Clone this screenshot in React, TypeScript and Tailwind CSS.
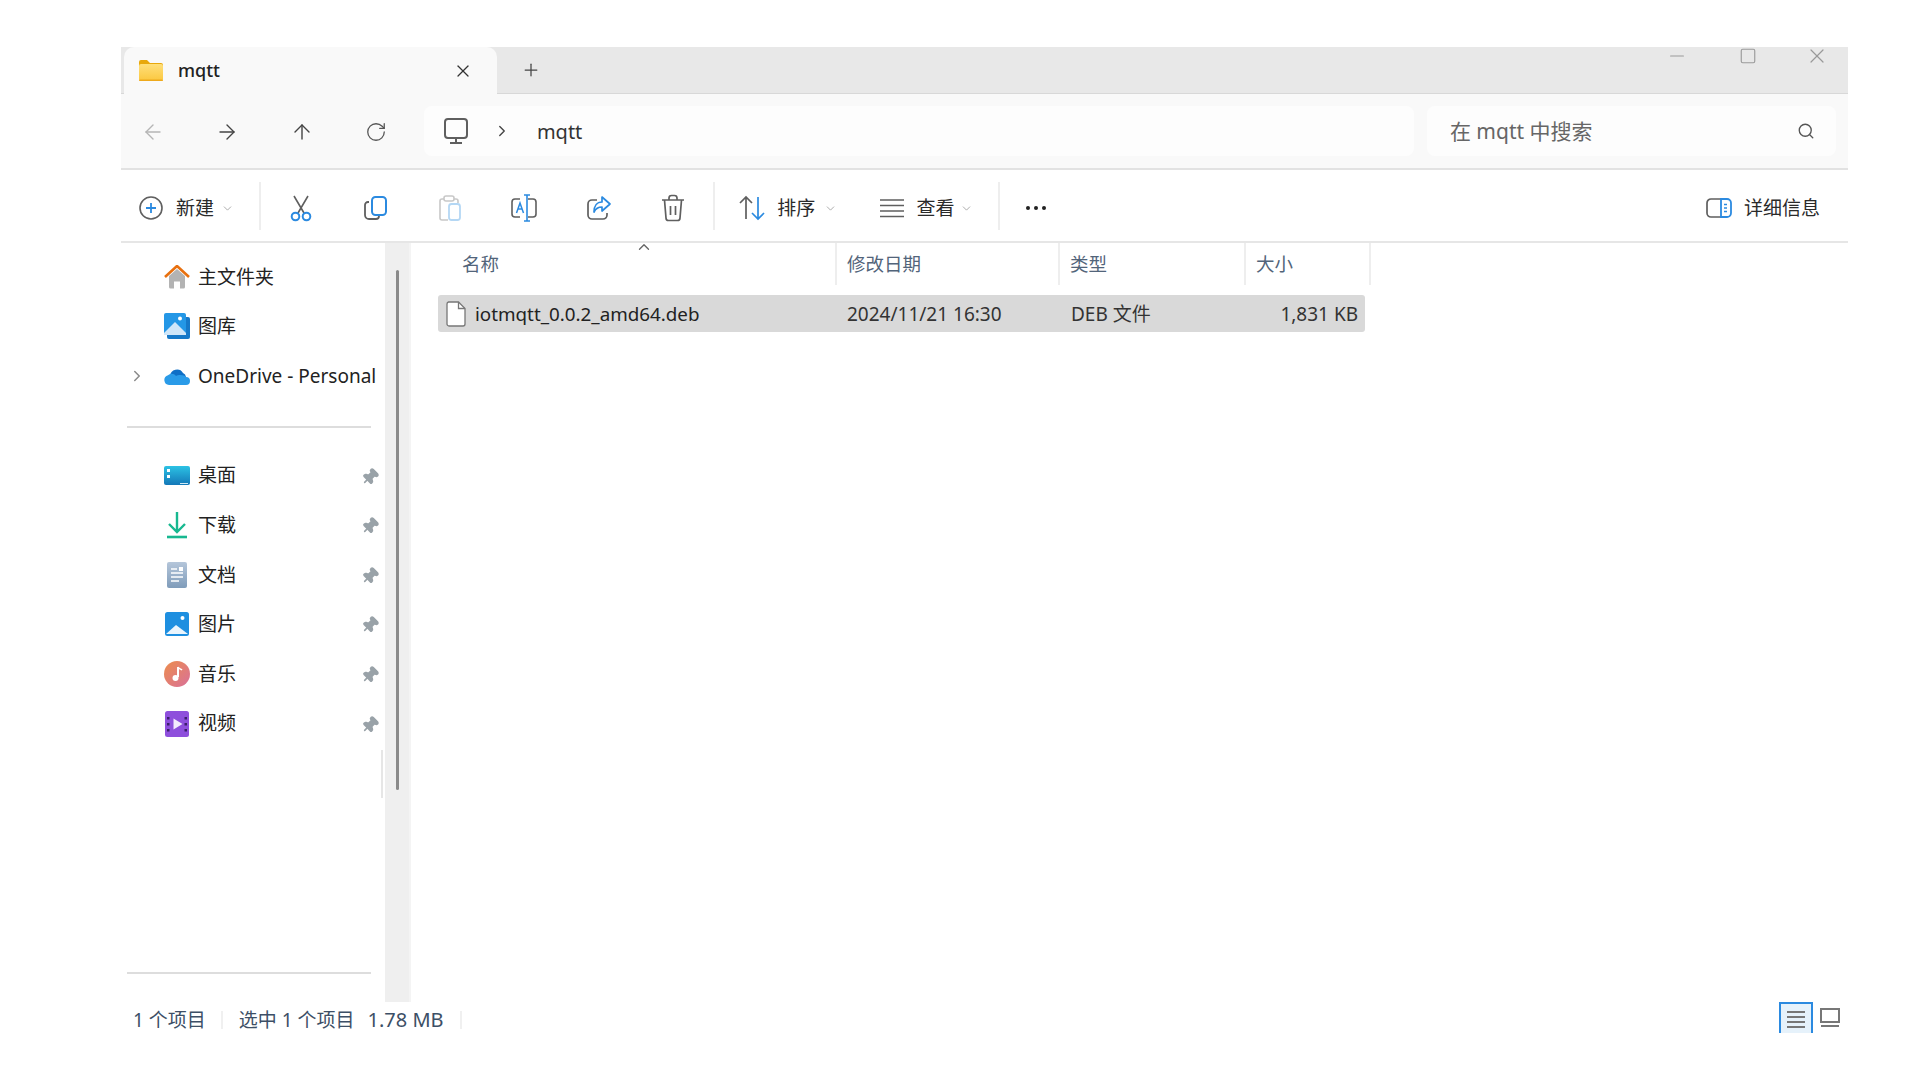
import React from 'react';
import {
  ArrowLeft,
  ArrowRight,
  ArrowUp,
  ChevronDown,
  ChevronRight,
  ChevronUp,
  Minus,
  Pin,
  Plus,
  RotateCw,
  Search,
  Square,
  X,
} from 'lucide-react';

const GRAY = '#5f5f5f';
const BLUE = '#2b8ae0';

const FolderIcon = () => (
  <svg width="26" height="24" viewBox="0 0 26 24">
    <defs>
      <linearGradient id="folder" x1="0" y1="0" x2="0" y2="1">
        <stop offset="0" stopColor="#ffdf7a" />
        <stop offset="1" stopColor="#fbc73f" />
      </linearGradient>
    </defs>
    <path d="M1 3a2 2 0 0 1 2-2h6l3 3h11a2 2 0 0 1 2 2v3H1z" fill="#e8a80c" />
    <rect x="1" y="5" width="24" height="17" rx="2" fill="url(#folder)" />
    <rect x="1" y="20.500" width="24" height="1.500" rx="0.700" fill="#eea91c" />
  </svg>
);

const MonitorIcon = () => (
  <svg width="26" height="28" viewBox="0 0 26 28" fill="none" stroke={GRAY} strokeWidth="2">
    <rect x="2" y="2" width="22" height="19" rx="3" />
    <path d="M13 21v4M7 26h12" />
  </svg>
);

const NewIcon = () => (
  <svg width="26" height="26" viewBox="0 0 26 26" fill="none">
    <circle cx="13" cy="13" r="11" stroke={GRAY} strokeWidth="1.600" />
    <path d="M13 8v10M8 13h10" stroke={BLUE} strokeWidth="1.800" />
  </svg>
);

const CutIcon = () => (
  <svg width="26" height="28" viewBox="0 0 26 28" fill="none">
    <path d="M6 2l10 17M20 2L10 19" stroke={GRAY} strokeWidth="1.600" />
    <circle cx="7.500" cy="22.500" r="3.800" stroke={BLUE} strokeWidth="2" />
    <circle cx="18.500" cy="22.500" r="3.800" stroke={BLUE} strokeWidth="2" />
  </svg>
);

const CopyIcon = () => (
  <svg width="26" height="26" viewBox="0 0 26 26" fill="none">
    <path d="M6 7H5a3 3 0 0 0-3 3v10a4 4 0 0 0 4 4h7a3 3 0 0 0 3-3" stroke={GRAY} strokeWidth="1.800" />
    <rect x="9" y="2" width="14" height="18" rx="3.500" stroke={BLUE} strokeWidth="2" />
  </svg>
);

const PasteIcon = () => (
  <svg width="26" height="28" viewBox="0 0 26 28" fill="none">
    <path d="M7 5H5a2 2 0 0 0-2 2v17a2 2 0 0 0 2 2h6M17 5h2a2 2 0 0 1 2 2v2" stroke="#c8c8c8" strokeWidth="1.600" />
    <rect x="7" y="2" width="10" height="5" rx="2" stroke="#c8c8c8" strokeWidth="1.600" />
    <rect x="12" y="10" width="11" height="16" rx="2.500" stroke="#b4d7f4" strokeWidth="1.800" />
  </svg>
);

const RenameIcon = () => (
  <svg width="28" height="30" viewBox="0 0 28 30" fill="none">
    <path d="M10 6H5a3 3 0 0 0-3 3v12a3 3 0 0 0 3 3h5M18 6h5a3 3 0 0 1 3 3v12a3 3 0 0 1-3 3h-5" stroke={GRAY} strokeWidth="1.600" />
    <path d="M17 2v26M14 2h6M14 28h6" stroke={BLUE} strokeWidth="1.600" />
    <path d="M6.500 20l3.500-10 3.500 10M8 16h4" stroke={BLUE} strokeWidth="1.500" />
  </svg>
);

const ShareIcon = () => (
  <svg width="26" height="26" viewBox="0 0 26 26" fill="none">
    <path d="M11 5H6a4 4 0 0 0-4 4v11a4 4 0 0 0 4 4h11a4 4 0 0 0 4-4v-2" stroke={GRAY} strokeWidth="1.700" />
    <path d="M16 2l8 7-8 7v-4c-4 0-6 1-8 5 0-6 3-10 8-10z" stroke={BLUE} strokeWidth="1.700" strokeLinejoin="round" />
  </svg>
);

const TrashIcon = () => (
  <svg width="24" height="28" viewBox="0 0 24 28" fill="none" stroke={GRAY} strokeWidth="1.700">
    <path d="M1 6h22M8 6V4a2.500 2.500 0 0 1 2.500-2.500h3A2.500 2.500 0 0 1 16 4v2" />
    <path d="M3.500 6l1.500 18a2.500 2.500 0 0 0 2.500 2.500h9A2.500 2.500 0 0 0 19 24l1.500-18" />
    <path d="M9.500 12v9M14.500 12v9" />
  </svg>
);

const SortIcon = () => (
  <svg width="28" height="26" viewBox="0 0 28 26" fill="none" strokeWidth="1.700">
    <path d="M8 24V2M2 8l6-6 6 6" stroke={GRAY} />
    <path d="M20 2v22M14 18l6 6 6-6" stroke={BLUE} />
  </svg>
);

const ViewIcon = () => (
  <svg width="26" height="20" viewBox="0 0 26 20" fill="none" stroke={GRAY} strokeWidth="1.600">
    <path d="M1 2h24M1 7.500h24M1 13h24M1 18.500h24" />
  </svg>
);

const DetailsIcon = () => (
  <svg width="26" height="20" viewBox="0 0 26 20" fill="none">
    <path d="M15 1H5a4 4 0 0 0-4 4v10a4 4 0 0 0 4 4h10" stroke={GRAY} strokeWidth="1.700" />
    <path d="M15 1h6a4 4 0 0 1 4 4v10a4 4 0 0 1-4 4h-6z" stroke={BLUE} strokeWidth="1.800" />
    <path d="M18 6.500h3M18 10h3M18 13.500h3" stroke={BLUE} strokeWidth="1.300" />
  </svg>
);

const HomeIcon = () => (
  <svg width="26" height="24" viewBox="0 0 26 24">
    <path d="M5 11L13 4l8 7v11a1.500 1.500 0 0 1-1.500 1.500H16v-7h-6v7H6.500A1.500 1.500 0 0 1 5 22z" fill="#b3b3b3" />
    <path d="M1 12L13 1l12 11" fill="none" stroke="#e8700f" strokeWidth="2.600" strokeLinejoin="round" />
  </svg>
);

const GalleryIcon = () => (
  <svg width="26" height="26" viewBox="0 0 26 26">
    <rect x="3" y="4" width="23" height="22" rx="2" fill="#1678c8" />
    <rect x="0" y="0" width="22" height="22" rx="2" fill="#2497e6" />
    <path d="M0 20L11 9l11 11v2H0z" fill="#cfe6f9" />
    <circle cx="16" cy="5.500" r="2" fill="#fff" />
  </svg>
);

const CloudIcon = () => (
  <svg width="26" height="18" viewBox="0 0 26 18">
    <path d="M6 9a7 7 0 0 1 13-3 5 5 0 0 1 3 4H9z" fill="#0f6fc6" />
    <path d="M5 18a5 5 0 0 1-1-9.800C6 6 10 6 12 9c3-2 9-1 10 1a4 4 0 0 1 0 8z" fill="#2a9be8" />
  </svg>
);

const DesktopIcon = () => (
  <svg width="26" height="20" viewBox="0 0 26 20">
    <defs>
      <linearGradient id="desk" x1="0" y1="0" x2="0" y2="1">
        <stop offset="0" stopColor="#2cc2e4" />
        <stop offset="1" stopColor="#1478b8" />
      </linearGradient>
    </defs>
    <rect width="26" height="19" rx="2" fill="url(#desk)" />
    <rect x="3" y="3" width="3" height="3" fill="#fff" />
    <rect x="3" y="9" width="3" height="3" fill="#fff" />
    <rect x="16" y="17" width="8" height="1" fill="#d0eaf5" />
  </svg>
);

const DownloadIcon = () => (
  <svg width="22" height="28" viewBox="0 0 22 28" fill="none" stroke="#17b890" strokeWidth="2.400">
    <path d="M11 1v19M3 13l8 8 8-8" />
    <path d="M1 26h20" strokeWidth="2.600" />
  </svg>
);

const DocsIcon = () => (
  <svg width="20" height="26" viewBox="0 0 20 26">
    <defs>
      <linearGradient id="docs" x1="0" y1="0" x2="0" y2="1">
        <stop offset="0" stopColor="#b5c6da" />
        <stop offset="1" stopColor="#7f9cba" />
      </linearGradient>
    </defs>
    <rect width="20" height="26" rx="2" fill="url(#docs)" />
    <path d="M4 7h6M4 11h12M4 15h12M4 19h8" stroke="#fff" strokeWidth="1.400" />
    <rect x="12" y="5" width="4" height="4" fill="#fff" />
  </svg>
);

const PicturesIcon = () => (
  <svg width="24" height="24" viewBox="0 0 24 24">
    <rect width="24" height="24" rx="2.500" fill="#1e8fe0" />
    <path d="M1 22l10-9 12 9z" fill="#eaf5fd" />
    <circle cx="17.500" cy="6" r="2" fill="#fff" />
  </svg>
);

const MusicIcon = () => (
  <svg width="26" height="26" viewBox="0 0 26 26">
    <defs>
      <linearGradient id="music" x1="0" y1="0" x2="1" y2="1">
        <stop offset="0" stopColor="#ec8d4c" />
        <stop offset="1" stopColor="#d9709a" />
      </linearGradient>
    </defs>
    <circle cx="13" cy="13" r="13" fill="url(#music)" />
    <path d="M14 6v10" stroke="#fff" strokeWidth="2" />
    <path d="M14 6c1 2 3 2 4 3" stroke="#fff" strokeWidth="1.600" fill="none" />
    <circle cx="11.500" cy="17" r="3" fill="#fff" />
  </svg>
);

const VideoIcon = () => (
  <svg width="24" height="26" viewBox="0 0 24 26">
    <rect width="24" height="26" rx="2.500" fill="#8e4fdc" />
    <path d="M8.500 7.500l9 5.500-9 5.500z" fill="#f3eafd" />
    <g fill="#3b1f6b">
      <rect x="2" y="6" width="2.500" height="2.500" />
      <rect x="2" y="12" width="2.500" height="2.500" />
      <rect x="2" y="18" width="2.500" height="2.500" />
      <rect x="19.500" y="6" width="2.500" height="2.500" />
      <rect x="19.500" y="12" width="2.500" height="2.500" />
      <rect x="19.500" y="18" width="2.500" height="2.500" />
    </g>
  </svg>
);

const FileIcon = () => (
  <svg width="20" height="26" viewBox="0 0 20 26" fill="#fff" stroke="#777" strokeWidth="1.300">
    <path d="M2.500 1h10L19 7.500V23a2 2 0 0 1-2 2H3a2 2 0 0 1-2-2V3a2 2 0 0 1 1.500-2z" />
    <path d="M12.500 1v6.500H19" fill="none" />
  </svg>
);

const Divider = () => <div className="mt-[-5px] h-[48px] w-[2px] bg-[#eeeeee]" />;

const ToolCell = ({ children }: { children: React.ReactNode }) => (
  <div className="flex w-[74.400px] items-center justify-center">{children}</div>
);

const NavCell = ({ children }: { children: React.ReactNode }) => (
  <div className="flex w-[64px] items-center justify-center">{children}</div>
);

const Caret = () => <ChevronDown size={13} strokeWidth={1.500} className="text-[#9a9a9a]" />;

const quickItems = [
  { label: '桌面', icon: <DesktopIcon /> },
  { label: '下载', icon: <DownloadIcon /> },
  { label: '文档', icon: <DocsIcon /> },
  { label: '图片', icon: <PicturesIcon /> },
  { label: '音乐', icon: <MusicIcon /> },
  { label: '视频', icon: <VideoIcon /> },
];

const NavRow = ({ icon, label, expand, pin }: { icon: React.ReactNode; label: string; expand?: boolean; pin?: boolean }) => (
  <div className="flex h-[49.600px] items-center text-[19px] text-[#222222]">
    <div className="flex w-[33px] justify-start pl-[7px]">
      {expand && <ChevronRight size={18} strokeWidth={2} className="text-[#8a8a8a]" />}
    </div>
    <div className="ml-[10px] flex w-[26px] justify-center">{icon}</div>
    <span className="ml-[8px] whitespace-nowrap">{label}</span>
    {pin && (
      <Pin size={18} strokeWidth={2.200} fill="#99a2a8" className="ml-auto mr-[6px] mt-[2px] rotate-45 text-[#99a2a8]" />
    )}
  </div>
);

const HeaderCell = ({ label, className }: { label: string; className: string }) => (
  <div className={`flex h-[42px] items-center border-r-2 border-[#eeeeee] ${className}`}>{label}</div>
);

export default function App() {
  return (
    <div className="min-h-screen bg-white pl-[121px] pt-[47px] font-['Noto_Sans','Noto_Sans_CJK_SC',sans-serif]">
      <div className="flex w-[1727px] flex-col">
        {/* tab strip */}
        <div className="flex h-[47px] border-b border-[#d8d8d8] bg-[#e8e8e8] pl-[3px]">
          <div className="flex h-[47px] w-[373px] items-center rounded-t-[10px] bg-[#f9f9f9] pl-[14px] pr-[24px]">
            <FolderIcon />
            <span className="ml-[14px] text-[18px] font-medium text-[#222222]">mqtt</span>
            <X size={20} strokeWidth={1.500} className="ml-auto text-[#333333]" />
          </div>
          <div className="ml-[24px] flex items-center">
            <Plus size={20} strokeWidth={1.500} className="text-[#444444]" />
          </div>
          <div className="ml-auto flex h-[18px] items-center gap-[48px] pr-[19px]">
            <Minus size={22} strokeWidth={1.200} className="mr-[3px] text-[#999999]" />
            <Square size={18} strokeWidth={1.500} className="text-[#999999]" />
            <X size={24} strokeWidth={1.200} className="text-[#999999]" />
          </div>
        </div>

        {/* nav bar */}
        <div className="flex h-[76px] items-center border-b-2 border-[#e2e2e2] bg-[#f9f9f9] pr-[12px]">
          <div className="flex gap-[10.300px] pt-[2px]">
            <NavCell><ArrowLeft size={24} strokeWidth={1.400} className="text-[#b5b5b5]" /></NavCell>
            <NavCell><ArrowRight size={24} strokeWidth={1.400} className="text-[#444444]" /></NavCell>
            <NavCell><ArrowUp size={24} strokeWidth={1.400} className="text-[#444444]" /></NavCell>
            <NavCell><RotateCw size={22} strokeWidth={1.400} className="text-[#555555]" /></NavCell>
          </div>
          <div className="ml-[16px] flex h-[50px] w-[990px] items-center rounded-[8px] bg-[#fdfdfd] pl-[19px]">
            <MonitorIcon />
            <ChevronRight size={18} strokeWidth={1.800} className="ml-[24px] text-[#444444]" />
            <span className="ml-[26px] pt-[2px] text-[20px] text-[#333333]">mqtt</span>
          </div>
          <div className="ml-[13px] flex h-[50px] flex-1 items-center rounded-[8px] bg-[#fdfdfd] pl-[23px] pr-[21px]">
            <span className="pt-[2px] text-[21px] text-[#666666]">在 mqtt 中搜索</span>
            <Search size={18} strokeWidth={1.800} className="ml-auto text-[#555555]" />
          </div>
        </div>

        {/* command bar */}
        <div className="flex h-[73px] items-center border-b-2 border-[#e6e6e6] bg-white pr-[28px] pt-[5px] text-[19px] text-[#2a2a2a]">
          <div className="ml-[17px]"><NewIcon /></div>
          <span className="ml-[12px]">新建</span>
          <div className="ml-[7px]"><Caret /></div>
          <div className="ml-[25px]"><Divider /></div>
          <div className="ml-[3px] flex">
            <ToolCell><CutIcon /></ToolCell>
            <ToolCell><CopyIcon /></ToolCell>
            <ToolCell><PasteIcon /></ToolCell>
            <ToolCell><RenameIcon /></ToolCell>
            <ToolCell><ShareIcon /></ToolCell>
            <ToolCell><TrashIcon /></ToolCell>
          </div>
          <div className="ml-[3px]"><Divider /></div>
          <div className="ml-[23px]"><SortIcon /></div>
          <span className="ml-[11px]">排序</span>
          <div className="ml-[9px]"><Caret /></div>
          <div className="ml-[42px]"><ViewIcon /></div>
          <span className="ml-[11px]">查看</span>
          <div className="ml-[6px]"><Caret /></div>
          <div className="ml-[25px]"><Divider /></div>
          <div className="ml-[26px] flex gap-[4px]">
            <span className="h-[4px] w-[4px] rounded-full bg-[#222222]" />
            <span className="h-[4px] w-[4px] rounded-full bg-[#222222]" />
            <span className="h-[4px] w-[4px] rounded-full bg-[#222222]" />
          </div>
          <div className="ml-auto flex items-center">
            <DetailsIcon />
            <span className="ml-[12px] whitespace-nowrap">详细信息</span>
          </div>
        </div>

        {/* body */}
        <div className="flex h-[759px]">
          <aside className="relative flex w-[264px] flex-col pt-[9px]">
            <NavRow icon={<HomeIcon />} label="主文件夹" />
            <NavRow icon={<GalleryIcon />} label="图库" />
            <NavRow icon={<CloudIcon />} label="OneDrive - Personal" expand />
            <div className="ml-[6px] mr-[14px] mt-[25px] h-[2px] bg-[#dddddd]" />
            <div className="mt-[23px]">
              {quickItems.map((item) => (
                <NavRow key={item.label} icon={item.icon} label={item.label} pin />
              ))}
            </div>
            <div className="ml-[6px] mr-[14px] mb-[28px] mt-auto h-[2px] bg-[#dddddd]" />
            <div className="absolute right-[2px] top-[507px] h-[48px] w-[2px] bg-[#e6e6e6]" />
          </aside>
          <div className="flex w-[24px] justify-center bg-[#efefef] pt-[27px]">
            <div className="h-[520px] w-[3px] rounded-full bg-[#8a8a8a]" />
          </div>
          <main className="relative flex-1 border-l-2 border-[#f4f4f4] pl-[27px]">
            <ChevronUp size={18} strokeWidth={1.800} className="absolute left-[224px] top-[-5px] text-[#666666]" />
            <div className="flex text-[18.500px] text-[#52647a]">
              <HeaderCell label="名称" className="w-[399px] pl-[24px]" />
              <HeaderCell label="修改日期" className="w-[223px] pl-[10px]" />
              <HeaderCell label="类型" className="w-[186px] pl-[10px]" />
              <HeaderCell label="大小" className="w-[125px] pl-[10px]" />
            </div>
            <div className="mt-[10px] flex h-[37px] w-[927px] items-center rounded-[3px] bg-[#d9d9d9] pt-[1px] text-[19px] text-[#222222]">
              <div className="ml-[8px]"><FileIcon /></div>
              <span className="ml-[9px] w-[372px] whitespace-nowrap text-[18.800px]">iotmqtt_0.0.2_amd64.deb</span>
              <span className="w-[224px] whitespace-nowrap text-[#333333]">2024/11/21 16:30</span>
              <span className="whitespace-nowrap text-[#333333]">DEB 文件</span>
              <span className="ml-auto mr-[7px] whitespace-nowrap text-[#333333]">1,831 KB</span>
            </div>
          </main>
        </div>

        {/* status bar */}
        <div className="flex h-[31px] items-center pl-[12px] pr-[6px] text-[19px] text-[#3d4f66]">
          <span className="mt-[5px] whitespace-nowrap">1 个项目</span>
          <div className="ml-[15px] mt-[5px] h-[18px] w-[2px] bg-[#f0f0f0]" />
          <span className="ml-[16px] mt-[5px] whitespace-nowrap">选中 1 个项目</span>
          <span className="ml-[13px] mt-[5px] whitespace-nowrap text-[20px]">1.78 MB</span>
          <div className="ml-[16px] mt-[5px] h-[18px] w-[2px] bg-[#f0f0f0]" />
          <div className="ml-auto flex h-full items-center">
            <div className="flex h-[31px] w-[34px] items-center justify-center border-x-2 border-t-2 border-[#2b8ae0] bg-[#e6f2fb]">
              <svg width="20" height="18" viewBox="0 0 20 18" fill="none" stroke="#777" strokeWidth="2">
                <path d="M1 2h18M1 7h18M1 12h18M1 17h18" />
              </svg>
            </div>
            <div className="ml-[7px] flex h-full w-[22px] items-center">
              <svg width="20" height="20" viewBox="0 0 20 20" fill="none" stroke="#777" strokeWidth="2">
                <rect x="1" y="1" width="18" height="13" />
                <path d="M1 18h18" />
              </svg>
            </div>
          </div>
        </div>
      </div>
    </div>
  );
}
